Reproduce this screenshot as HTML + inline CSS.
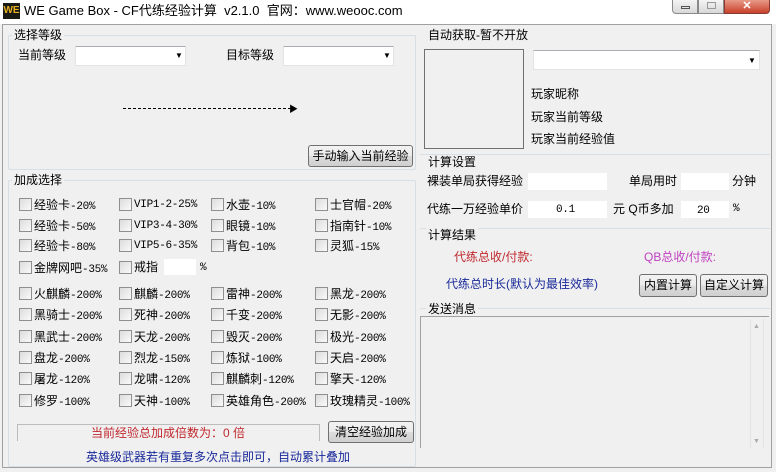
<!DOCTYPE html>
<html><head><meta charset="utf-8"><style>
*{margin:0;padding:0;box-sizing:border-box}
body{width:776px;height:472px;background:#f0f0f0;font-family:"Liberation Sans","Noto Sans CJK SC",sans-serif;font-size:12px;color:#000;position:relative;overflow:hidden}
.a{position:absolute;white-space:nowrap;line-height:14px}
.cb{position:absolute;width:13px;height:13px;border:1px solid #8e8f8f;background:linear-gradient(135deg,#dcdcdc,#fafafa)}
.in{position:absolute;background:#fff;border:1px solid #e2e3e3;border-top-color:#abadb3}
.btn{position:absolute;border:1px solid #707070;border-radius:3px;background:linear-gradient(#f2f2f2,#ebebeb 50%,#dddddd 51%,#cfcfcf);text-align:center;font-size:12px;white-space:nowrap}
.grp{position:absolute;border:1px solid #d5dfe5;border-radius:2px}
.lbl{position:absolute;background:#f0f0f0;padding:0 2px;font-size:12px;line-height:14px}
.mono{font-family:"Liberation Mono","Noto Sans CJK SC",monospace;font-size:11px;letter-spacing:-0.3px}
.mono span{font-family:"Liberation Sans","Noto Sans CJK SC",sans-serif;font-size:12px;letter-spacing:0}
</style></head><body>
<div style="position:absolute;left:0;top:0;width:776px;height:24px;background:#fff"></div>
<div style="position:absolute;left:3px;top:3px;width:17px;height:16px;background:#1a1a14;color:#e8b020;font-weight:bold;font-size:10px;line-height:16px;text-align:center">WE</div>
<div class="a" style="left:24px;top:3px;font-size:13px;line-height:16px">WE Game Box - CF代练经验计算&nbsp; v2.1.0&nbsp; 官网：www.weooc.com</div>
<div style="position:absolute;left:672px;top:0;width:26px;height:14px;border:1px solid #8a8a8a;border-top:0;border-radius:0 0 0 4px;background:linear-gradient(#f4f4f4,#d8d8d8)"><div style="position:absolute;left:8px;top:6px;width:9px;height:3px;border:1px solid #555"></div></div>
<div style="position:absolute;left:698px;top:0;width:26px;height:14px;border:1px solid #8a8a8a;border-top:0;background:linear-gradient(#f4f4f4,#d8d8d8)"><div style="position:absolute;left:8px;top:2px;width:9px;height:7px;border:1px solid #999"></div></div>
<div style="position:absolute;left:724px;top:0;width:46px;height:14px;border:1px solid #8a3a30;border-top:0;border-radius:0 0 4px 0;background:linear-gradient(#e89a88,#c8412a);color:#fff;font-size:11px;text-align:center;line-height:12px;font-weight:bold">✕</div>

<div style="position:absolute;left:2px;top:24px;width:416px;height:444px;border:1px solid #a0a0a0;border-right:0"></div>
<div style="position:absolute;left:2px;top:467px;width:770px;height:1px;background:#a0a0a0"></div>
<div style="position:absolute;left:771px;top:24px;width:1px;height:444px;background:#a0a0a0"></div>
<div style="position:absolute;left:2px;top:24px;width:770px;height:1px;background:#a0a0a0"></div>

<div class="grp" style="left:8px;top:35px;width:408px;height:135px"></div>
<div class="lbl" style="left:12px;top:28px">选择等级</div>
<div class="a" style="left:18px;top:48px">当前等级</div>
<div class="in" style="left:75px;top:46px;width:111px;height:20px"></div><div class="a" style="left:175px;top:49px;font-size:8px">▼</div>
<div class="a" style="left:226px;top:48px">目标等级</div>
<div class="in" style="left:283px;top:46px;width:111px;height:20px"></div><div class="a" style="left:383px;top:49px;font-size:8px">▼</div>
<div style="position:absolute;left:123px;top:108px;width:168px;border-top:1px dashed #000"></div><div class="a" style="left:289px;top:102px;font-size:9px">▶</div>
<div class="btn" style="left:308px;top:145px;width:105px;height:22px;line-height:20px">手动输入当前经验</div>

<div class="grp" style="left:8px;top:180px;width:408px;height:287px"></div>
<div class="lbl" style="left:12px;top:173px">加成选择</div>

<div class="cb" style="left:19px;top:198px"></div><div class="a mono" style="left:34px;top:198px"><span>经验卡</span>-20%</div>
<div class="cb" style="left:119px;top:198px"></div><div class="a mono" style="left:134px;top:198px">VIP1-2-25%</div>
<div class="cb" style="left:211px;top:198px"></div><div class="a mono" style="left:226px;top:198px"><span>水壶</span>-10%</div>
<div class="cb" style="left:315px;top:198px"></div><div class="a mono" style="left:330px;top:198px"><span>士官帽</span>-20%</div>

<div class="cb" style="left:19px;top:219px"></div><div class="a mono" style="left:34px;top:219px"><span>经验卡</span>-50%</div>
<div class="cb" style="left:119px;top:219px"></div><div class="a mono" style="left:134px;top:219px">VIP3-4-30%</div>
<div class="cb" style="left:211px;top:219px"></div><div class="a mono" style="left:226px;top:219px"><span>眼镜</span>-10%</div>
<div class="cb" style="left:315px;top:219px"></div><div class="a mono" style="left:330px;top:219px"><span>指南针</span>-10%</div>

<div class="cb" style="left:19px;top:239px"></div><div class="a mono" style="left:34px;top:239px"><span>经验卡</span>-80%</div>
<div class="cb" style="left:119px;top:239px"></div><div class="a mono" style="left:134px;top:239px">VIP5-6-35%</div>
<div class="cb" style="left:211px;top:239px"></div><div class="a mono" style="left:226px;top:239px"><span>背包</span>-10%</div>
<div class="cb" style="left:315px;top:239px"></div><div class="a mono" style="left:330px;top:239px"><span>灵狐</span>-15%</div>

<div class="cb" style="left:19px;top:261px"></div><div class="a mono" style="left:34px;top:261px"><span>金牌网吧</span>-35%</div>
<div class="cb" style="left:119px;top:261px"></div><div class="a" style="left:134px;top:260px">戒指</div>
<div class="in" style="left:164px;top:259px;width:32px;height:16px;border:none"></div><div class="a mono" style="left:200px;top:261px">%</div>

<div class="cb" style="left:19px;top:287px"></div><div class="a mono" style="left:34px;top:287px"><span>火麒麟</span>-200%</div>
<div class="cb" style="left:119px;top:287px"></div><div class="a mono" style="left:134px;top:287px"><span>麒麟</span>-200%</div>
<div class="cb" style="left:211px;top:287px"></div><div class="a mono" style="left:226px;top:287px"><span>雷神</span>-200%</div>
<div class="cb" style="left:315px;top:287px"></div><div class="a mono" style="left:330px;top:287px"><span>黑龙</span>-200%</div>

<div class="cb" style="left:19px;top:308px"></div><div class="a mono" style="left:34px;top:308px"><span>黑骑士</span>-200%</div>
<div class="cb" style="left:119px;top:308px"></div><div class="a mono" style="left:134px;top:308px"><span>死神</span>-200%</div>
<div class="cb" style="left:211px;top:308px"></div><div class="a mono" style="left:226px;top:308px"><span>千变</span>-200%</div>
<div class="cb" style="left:315px;top:308px"></div><div class="a mono" style="left:330px;top:308px"><span>无影</span>-200%</div>

<div class="cb" style="left:19px;top:330px"></div><div class="a mono" style="left:34px;top:330px"><span>黑武士</span>-200%</div>
<div class="cb" style="left:119px;top:330px"></div><div class="a mono" style="left:134px;top:330px"><span>天龙</span>-200%</div>
<div class="cb" style="left:211px;top:330px"></div><div class="a mono" style="left:226px;top:330px"><span>毁灭</span>-200%</div>
<div class="cb" style="left:315px;top:330px"></div><div class="a mono" style="left:330px;top:330px"><span>极光</span>-200%</div>

<div class="cb" style="left:19px;top:351px"></div><div class="a mono" style="left:34px;top:351px"><span>盘龙</span>-200%</div>
<div class="cb" style="left:119px;top:351px"></div><div class="a mono" style="left:134px;top:351px"><span>烈龙</span>-150%</div>
<div class="cb" style="left:211px;top:351px"></div><div class="a mono" style="left:226px;top:351px"><span>炼狱</span>-100%</div>
<div class="cb" style="left:315px;top:351px"></div><div class="a mono" style="left:330px;top:351px"><span>天启</span>-200%</div>

<div class="cb" style="left:19px;top:372px"></div><div class="a mono" style="left:34px;top:372px"><span>屠龙</span>-120%</div>
<div class="cb" style="left:119px;top:372px"></div><div class="a mono" style="left:134px;top:372px"><span>龙啸</span>-120%</div>
<div class="cb" style="left:211px;top:372px"></div><div class="a mono" style="left:226px;top:372px"><span>麒麟刺</span>-120%</div>
<div class="cb" style="left:315px;top:372px"></div><div class="a mono" style="left:330px;top:372px"><span>擎天</span>-120%</div>

<div class="cb" style="left:19px;top:394px"></div><div class="a mono" style="left:34px;top:394px"><span>修罗</span>-100%</div>
<div class="cb" style="left:119px;top:394px"></div><div class="a mono" style="left:134px;top:394px"><span>天神</span>-100%</div>
<div class="cb" style="left:211px;top:394px"></div><div class="a mono" style="left:226px;top:394px"><span>英雄角色</span>-200%</div>
<div class="cb" style="left:315px;top:394px"></div><div class="a mono" style="left:330px;top:394px"><span>玫瑰精灵</span>-100%</div>

<div style="position:absolute;left:17px;top:424px;width:303px;height:17px;border:1px solid #bcbcbc;border-bottom:0"></div>
<div class="a" style="left:91px;top:426px;color:#c0282e;font-size:12px">当前经验总加成倍数为：0 倍</div>
<div class="btn" style="left:328px;top:421px;width:86px;height:22px;line-height:20px">清空经验加成</div>
<div class="a" style="left:86px;top:450px;color:#1a2a9a;font-size:12px">英雄级武器若有重复多次点击即可，自动累计叠加</div>

<div class="lbl" style="left:426px;top:28px">自动获取-暂不开放</div>
<div style="position:absolute;left:424px;top:49px;width:100px;height:100px;border:1px solid #707070"></div>
<div class="in" style="left:533px;top:50px;width:227px;height:20px"></div><div class="a" style="left:748px;top:54px;font-size:8px">▼</div>
<div class="a" style="left:531px;top:87px">玩家昵称</div>
<div class="a" style="left:531px;top:110px">玩家当前等级</div>
<div class="a" style="left:531px;top:132px">玩家当前经验值</div>

<div style="position:absolute;left:420px;top:154px;width:350px;height:1px;background:#d5dfe5"></div>
<div class="lbl" style="left:426px;top:155px">计算设置</div>
<div class="a" style="left:427px;top:174px">裸装单局获得经验</div>
<div class="in" style="left:528px;top:173px;width:79px;height:17px;border:none"></div>
<div class="a" style="left:629px;top:174px">单局用时</div>
<div class="in" style="left:681px;top:173px;width:48px;height:17px;border:none"></div>
<div class="a" style="left:732px;top:174px">分钟</div>
<div class="a" style="left:427px;top:202px">代练一万经验单价</div>
<div class="in" style="left:528px;top:201px;width:79px;height:17px;border:none"></div><div class="a mono" style="left:556px;top:203px">0.1</div>
<div class="a" style="left:613px;top:202px">元 Q币多加</div>
<div class="in" style="left:681px;top:201px;width:48px;height:17px;border:none"></div><div class="a mono" style="left:697px;top:204px">20</div>
<div class="a mono" style="left:733px;top:202px">%</div>

<div style="position:absolute;left:420px;top:228px;width:350px;height:1px;background:#d5dfe5"></div>
<div class="lbl" style="left:426px;top:228px">计算结果</div>
<div class="a" style="left:454px;top:250px;color:#c0282e">代练总收/付款:</div>
<div class="a" style="left:644px;top:250px;color:#c040c0">QB总收/付款:</div>
<div class="a" style="left:446px;top:277px;color:#1a2a9a">代练总时长(默认为最佳效率)</div>
<div class="btn" style="left:639px;top:274px;width:58px;height:23px;line-height:21px">内置计算</div>
<div class="btn" style="left:700px;top:274px;width:68px;height:23px;line-height:21px">自定义计算</div>

<div style="position:absolute;left:420px;top:308px;width:350px;height:1px;background:#d5dfe5"></div>
<div class="lbl" style="left:426px;top:302px">发送消息</div>
<div style="position:absolute;left:420px;top:316px;width:349px;height:132px;border:1px solid #a0a0a0;border-right:0;border-bottom:0"></div>
<div style="position:absolute;left:750px;top:319px;width:14px;height:129px;border-left:1px solid #e4e4e4;border-right:1px solid #e4e4e4"></div>
<div class="a" style="left:753px;top:320px;font-size:7px;color:#aaa">▲</div>
<div class="a" style="left:753px;top:435px;font-size:7px;color:#aaa">▼</div>
</body></html>
